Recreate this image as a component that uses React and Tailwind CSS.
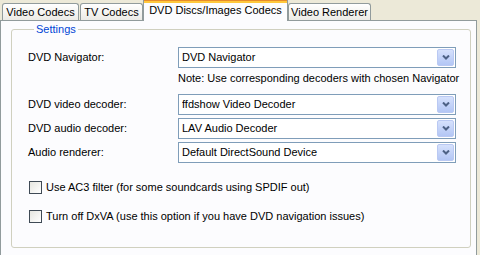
import React from 'react';

const font = { fontFamily: '"Liberation Sans", Arial, sans-serif' };

function Arrow() {
  return (
    <svg width="8" height="5" viewBox="0 0 8 5">
      <path d="M1 0.5 L4 3.5 L7 0.5" stroke="#4d6185" strokeWidth="2" fill="none" />
    </svg>
  );
}

function Combo({ value }) {
  return (
    <div className="flex items-center h-[21px] w-[278px] border border-[#7f9db9] bg-white pl-[3px] pr-px">
      <span className="flex-1 truncate">{value}</span>
      <div className="w-[17px] h-[17px] rounded-[2px] border border-[#bac9f3] bg-linear-to-b from-[#d6e1fc] to-[#b3c6f5] flex items-center justify-center">
        <Arrow />
      </div>
    </div>
  );
}

function Row({ label, value, className = '' }) {
  return (
    <div className={`flex items-center ${className}`}>
      <span className="w-[150px]">{label}</span>
      <Combo value={value} />
    </div>
  );
}

function Check({ label, className = '' }) {
  return (
    <div className={`flex items-center h-[13px] ${className}`}>
      <div className="ml-px w-[13px] h-[13px] border border-[#3f4a55] bg-linear-to-br from-[#e6e6e0] to-white" />
      <span className="ml-[4px]">{label}</span>
    </div>
  );
}

function Tab({ label, active, className = '' }) {
  if (active) {
    return (
      <div className={`relative z-10 h-[21px] -mb-px bg-[#fcfcfe] border-x border-[#919b9c] flex flex-col ${className}`}>
        <div className="h-px bg-[#e68b2c]" />
        <div className="h-[2px] bg-[#ffc83c]" />
        <div className="flex-1 flex items-start justify-center pt-px">{label}</div>
      </div>
    );
  }
  return (
    <div className={`h-[17px] border-x border-t border-[#919b9c] rounded-t-[3px] bg-linear-to-b from-white to-[#ecebe6] flex items-center justify-center ${className}`}>
      {label}
    </div>
  );
}

export default function App() {
  return (
    <div className="w-[480px] h-[255px] overflow-hidden bg-[#ece9d8] text-[11px] leading-[13px] text-black" style={font}>
      <div className="flex items-end h-[20px]">
        <Tab label="Video Codecs" className="ml-[2px] w-[77px]" />
        <Tab label="TV Codecs" className="ml-px w-[63px]" />
        <Tab label="DVD Discs/Images Codecs" active className="w-[145px]" />
        <Tab label="Video Renderer" className="w-[83px]" />
      </div>
      <div className="w-[477px] h-[240px] border border-[#919b9c] bg-[#fcfcfe] pl-[10px] pt-[2px]">
        <fieldset className="w-[460px] h-[225px] border border-[#d0d0bf] rounded-[3px] px-0 pl-[16px] flex flex-col">
          <legend className="ml-[6px] px-[2px] text-[#0046d5]">Settings</legend>
          <Row label="DVD Navigator:" value="DVD Navigator" className="mt-[11px]" />
          <div className="pl-[150px] mt-[4px]">Note: Use corresponding decoders with chosen Navigator</div>
          <Row label="DVD video decoder:" value="ffdshow Video Decoder" className="mt-[9px]" />
          <Row label="DVD audio decoder:" value="LAV Audio Decoder" className="mt-[3px]" />
          <Row label="Audio renderer:" value="Default DirectSound Device" className="mt-[3px]" />
          <Check label="Use AC3 filter (for some soundcards using SPDIF out)" className="mt-[18px]" />
          <Check label="Turn off DxVA (use this option if you have DVD navigation issues)" className="mt-[16px]" />
        </fieldset>
      </div>
    </div>
  );
}
